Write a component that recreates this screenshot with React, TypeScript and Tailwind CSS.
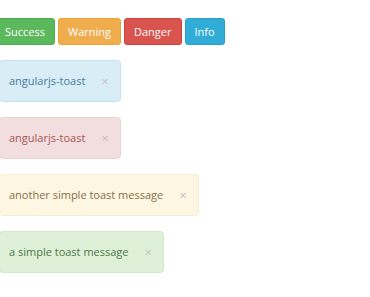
import React from "react";

const buttons = [
  { label: "Success", className: "bg-[#5cb85c] border-[#4cae4c]" },
  { label: "Warning", className: "bg-[#f0ad4e] border-[#eea236]" },
  { label: "Danger", className: "bg-[#d9534f] border-[#d43f3a]" },
  { label: "Info", className: "bg-[#31acd6] border-[#2aa1cc]" },
];

const toasts = [
  {
    text: "angularjs-toast",
    className: "bg-[#d9edf7] border-[#c4e3f1] text-[#4a7c9a]",
  },
  {
    text: "angularjs-toast",
    className: "bg-[#f2dede] border-[#ebd0d4] text-[#a65555]",
  },
  {
    text: "another simple toast message",
    className: "bg-[#fcf6e3] border-[#f8ecd0] text-[#86704a]",
  },
  {
    text: "a simple toast message",
    className: "bg-[#dff0d8] border-[#d3e8c8] text-[#4c7a45]",
  },
];

const App = () => {
  return (
    <div
      className="w-[370px] h-[297px] bg-white overflow-hidden"
      style={{ fontFamily: '"Open Sans", "Liberation Sans", sans-serif' }}
    >
      <div className="flex gap-[3px] pt-[18px] -ml-[5px]">
        {buttons.map((b) => (
          <button
            key={b.label}
            className={`h-[27px] px-[9px] rounded-[3px] border text-white text-[11px] leading-none ${b.className}`}
          >
            {b.label}
          </button>
        ))}
      </div>
      <div className="flex flex-col items-start gap-[15px] mt-[15px] -ml-[1px]">
        {toasts.map((t, i) => (
          <div
            key={i}
            className={`h-[42px] flex items-center border rounded-[4px] pl-[9px] pr-[11px] text-[11px] ${t.className}`}
          >
            <span>{t.text}</span>
            <span className="ml-[16px] text-[#c4c4c4] text-[13px] leading-none">
              ×
            </span>
          </div>
        ))}
      </div>
    </div>
  );
};

export default App;
